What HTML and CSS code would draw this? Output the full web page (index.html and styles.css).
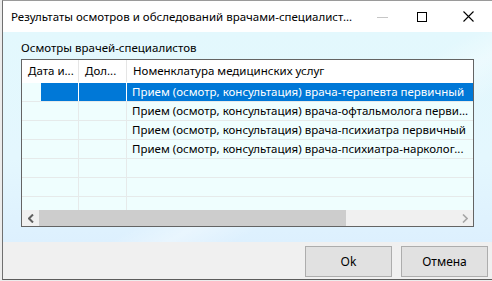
FILE: index.html
```html
<!DOCTYPE html>
<html lang="ru">
<head>
<meta charset="utf-8">
<title>Результаты осмотров</title>
<link rel="stylesheet" href="styles.css">
</head>
<body>
<div class="window">
  <div class="titlebar">
    <span class="title">Результаты осмотров и обследований врачами-специалист...</span>
    <div class="controls">
      <span class="ctl ctl-min"><svg width="11" height="1" viewBox="0 0 11 1"><rect x="0" y="0" width="11" height="1" fill="#c6c6c6"/></svg></span>
      <span class="ctl ctl-max"><svg width="10" height="10" viewBox="0 0 10 10"><rect x="0.5" y="0.5" width="9" height="9" fill="none" stroke="#000" stroke-width="1"/></svg></span>
      <span class="ctl ctl-close"><svg width="11" height="11" viewBox="0 0 11 11"><path d="M0.5 0.5 L10.5 10.5 M10.5 0.5 L0.5 10.5" stroke="#000" stroke-width="1.1" fill="none"/></svg></span>
    </div>
  </div>
  <div class="content">
    <div class="group-label">Осмотры врачей-специалистов</div>
    <div class="grid">
      <div class="grid-head">
        <div class="hcell">Дата и...</div>
        <div class="hcell">Дол...</div>
        <div class="hcell last">Номенклатура медицинских услуг</div>
      </div>
      <div class="grid-body">
        <div class="row selected">
          <div class="cell c1"><span class="sel-part"></span></div>
          <div class="cell c2"></div>
          <div class="cell c3">Прием (осмотр, консультация) врача-терапевта первичный</div>
        </div>
        <div class="row">
          <div class="cell c1"></div>
          <div class="cell c2"></div>
          <div class="cell c3">Прием (осмотр, консультация) врача-офтальмолога перви...</div>
        </div>
        <div class="row">
          <div class="cell c1"></div>
          <div class="cell c2"></div>
          <div class="cell c3">Прием (осмотр, консультация) врача-психиатра первичный</div>
        </div>
        <div class="row">
          <div class="cell c1"></div>
          <div class="cell c2"></div>
          <div class="cell c3">Прием (осмотр, консультация) врача-психиатра-нарколог...</div>
        </div>
        <div class="row">
          <div class="cell c1"></div>
          <div class="cell c2"></div>
          <div class="cell c3"></div>
        </div>
        <div class="row">
          <div class="cell c1"></div>
          <div class="cell c2"></div>
          <div class="cell c3"></div>
        </div>
        <div class="row">
          <div class="cell c1"></div>
          <div class="cell c2"></div>
          <div class="cell c3"></div>
        </div>
      </div>
      <div class="hscroll">
        <span class="sb-btn"><svg width="6" height="9" viewBox="0 0 6 9"><path d="M5 0.5 L1 4.5 L5 8.5" stroke="#606060" stroke-width="2" fill="none"/></svg></span>
        <div class="sb-track"><div class="sb-thumb"></div></div>
        <span class="sb-btn"><svg width="6" height="9" viewBox="0 0 6 9"><path d="M1 0.5 L5 4.5 L1 8.5" stroke="#a6a6a6" stroke-width="1.6" fill="none"/></svg></span>
      </div>
    </div>
  </div>
  <div class="footer">
    <button class="btn">Ok</button>
    <button class="btn">Отмена</button>
  </div>
</div>
</body>
</html>
```
FILE: styles.css
```css
html, body {
  margin: 0;
  padding: 0;
}
body {
  width: 492px;
  height: 281px;
  overflow: hidden;
  background: #ececec;
  font-family: "Noto Sans", "Open Sans", sans-serif;
  font-size: 11.5px;
  color: #000;
}
.window {
  margin-left: 2px;
  border-left: 1px solid #707070;
  border-top: 1px solid #9a9a9a;
  border-bottom: 1px solid #5c5c5c;
  display: flex;
  flex-direction: column;
  box-sizing: border-box;
  height: 280px;
}
.titlebar {
  height: 31px;
  background: #fff;
  display: flex;
  align-items: center;
  padding-left: 8px;
}
.title {
  flex: 1;
  white-space: nowrap;
  line-height: 16px;
  padding-top: 1px;
}
.controls {
  display: flex;
  align-items: center;
  height: 31px;
}
.ctl {
  display: flex;
  align-items: center;
  justify-content: center;
  width: 46px;
  height: 31px;
}
.ctl-min { width: 34px; }
.ctl-min svg { margin-top: 1px; }
.ctl-close { margin-right: 1px; }
.content {
  height: 210px;
  box-sizing: border-box;
  padding: 8px 0 0 18px;
  background:
    linear-gradient(150deg, rgba(255,255,255,0) 55%, rgba(255,255,255,0.35) 62%, rgba(255,255,255,0) 70%),
    linear-gradient(180deg, #e3f8fd 0%, #e4f7fe 60%, #ddf0fe 100%);
}
.group-label {
  line-height: 16px;
  height: 16px;
  margin-bottom: 3px;
  white-space: nowrap;
}
.grid {
  width: 451px;
  height: 166px;
  border: 1px solid #646464;
  background: #effefe;
  display: flex;
  flex-direction: column;
}
.grid-head {
  display: grid;
  grid-template-columns: 57px 48px 1fr;
  height: 22px;
  background: #fff;
  border-bottom: 1px solid #ffffff;
}
.hcell {
  border-right: 1px solid #e5e5e5;
  padding-left: 6px;
  line-height: 22px;
  white-space: nowrap;
  overflow: hidden;
}
.hcell.last { border-right: none; }
.grid-body {
  height: 127px;
  overflow: hidden;
}
.row {
  display: grid;
  grid-template-columns: 57px 48px 1fr;
  height: 19px;
  box-sizing: border-box;
  border-bottom: 1px solid #e6eaea;
}
.cell {
  border-right: 1px solid #e6eaea;
  line-height: 18px;
  padding-left: 5px;
  white-space: nowrap;
  overflow: hidden;
}
.cell.c1 { padding-left: 0; }
.cell.c3 { border-right: none; }
.row.selected .cell { border-right-color: #ffffff; }
.row.selected .c2,
.row.selected .c3 {
  background: #0078d7;
  color: #fff;
}
.row.selected .sel-part {
  display: block;
  margin-left: 19px;
  height: 18px;
  background: #0078d7;
}
.hscroll {
  display: flex;
  height: 16px;
  background: #f0f0f0;
}
.sb-btn {
  width: 17px;
  height: 16px;
  display: flex;
  align-items: center;
  justify-content: center;
}
.sb-track {
  flex: 1;
  display: flex;
  align-items: stretch;
}
.sb-thumb {
  width: 307px;
  background: #cdcdcd;
}
.footer {
  flex: 1;
  background: #f0f0f0;
  display: flex;
  justify-content: flex-end;
  align-items: flex-start;
  padding-top: 4px;
  padding-right: 4px;
  gap: 9px;
}
.btn {
  width: 87px;
  height: 31px;
  background: #e1e1e1;
  border: 1px solid #adadad;
  font-family: inherit;
  font-size: 12px;
  color: #000;
  padding: 0;
  margin: 0;
}
```
